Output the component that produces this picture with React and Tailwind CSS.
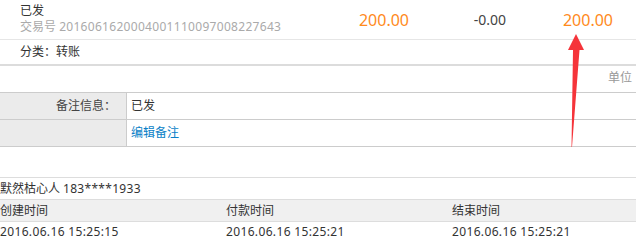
import React from 'react';

const font = "font-['Noto_Sans','Noto_Sans_CJK_SC',sans-serif]";

const Arrow = () => (
  <svg className="absolute left-0 top-0 pointer-events-none" width="636" height="241" viewBox="0 0 636 241">
    <polygon points="576,34 584,50 579.5,50 572,147 571.5,147 573,50 568,50" fill="#f5343a" />
  </svg>
);

export default function App() {
  return (
    <div className={`relative w-[636px] h-[241px] bg-white text-[12px] text-[#333] overflow-hidden ${font}`}>
      {/* top summary */}
      <div className="flex h-[40px] border-b border-[#e6e6e6]">
        <div className="flex-1 pl-[20px] pt-[3px] leading-[16px]">
          <div>已发</div>
          <div className="text-[#aaa]">交易号 <span className="tracking-[0.3px]">2016061620004001110097008227643</span></div>
        </div>
        <div className="w-[108px] flex items-center justify-center text-[16px] text-[#ff8a1c]">200.00</div>
        <div className="w-[104px] flex items-center justify-center text-[14px] text-[#444]">-0.00</div>
        <div className="w-[94px] flex items-center justify-end pr-[23px] text-[16px] text-[#ff8a1c]">200.00</div>
      </div>

      <div className="h-[26px] pl-[20px] flex items-center border-b-2 border-[#dcdcdc]">分类：转账</div>

      <div className="h-[26px] flex justify-end items-start pr-[4px] pt-[3px] text-[#999]">单位</div>

      {/* remark table */}
      <div className="border-t border-[#ccc]">
        <div className="flex h-[27px] border-b border-[#ccc]">
          <div className="w-[127px] bg-[#ebebeb] border-r border-[#ccc] flex items-center justify-end pr-[10px] text-[#444]">备注信息：</div>
          <div className="flex-1 flex items-center pl-[4px]">已发</div>
        </div>
        <div className="flex h-[27px] border-b border-[#ccc]">
          <div className="w-[127px] bg-[#ebebeb] border-r border-[#ccc]"></div>
          <div className="flex-1 flex items-center pl-[4px] text-[#0a7fc7]">编辑备注</div>
        </div>
      </div>

      <div className="h-[30px]"></div>

      {/* buyer + times */}
      <div className="border-t border-[#ddd] h-[22px] flex items-center">默然枯心人 <span className="ml-[3px] tracking-[0.3px]">183****1933</span></div>
      <div className="grid grid-cols-[226px_226px_1fr] h-[23px] bg-[#f0f0f0] border-y border-[#ddd] items-center">
        <div>创建时间</div>
        <div>付款时间</div>
        <div>结束时间</div>
      </div>
      <div className="grid grid-cols-[226px_226px_1fr] h-[19px] items-center tracking-[0.35px]">
        <div>2016.06.16 15:25:15</div>
        <div>2016.06.16 15:25:21</div>
        <div>2016.06.16 15:25:21</div>
      </div>

      <Arrow />
    </div>
  );
}
